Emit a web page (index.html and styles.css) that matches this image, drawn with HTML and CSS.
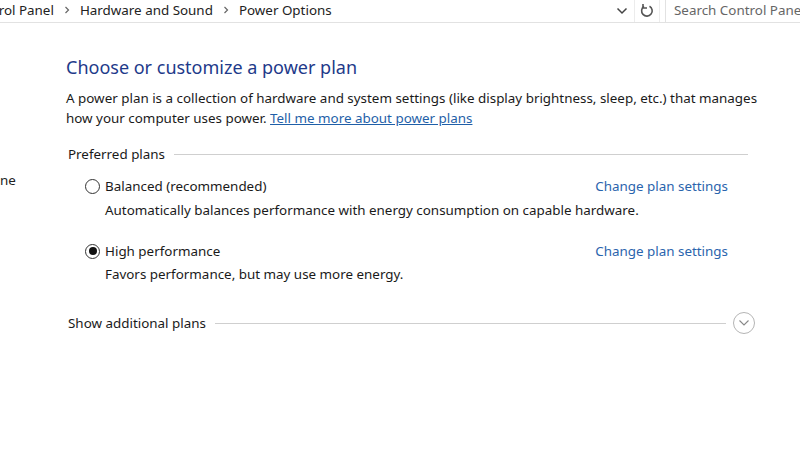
FILE: index.html
```html
<!DOCTYPE html>
<html>
<head>
<meta charset="utf-8">
<link rel="stylesheet" href="styles.css">
</head>
<body>
<div class="topbar">
  <div class="crumbs">
    <span class="crumb">Control Panel</span>
    <span class="sep"><svg width="8" height="8" viewBox="0 0 8 8"><path d="M2.5 1 L5.5 4 L2.5 7" fill="none" stroke="#666" stroke-width="1.2"/></svg></span>
    <span class="crumb">Hardware and Sound</span>
    <span class="sep"><svg width="8" height="8" viewBox="0 0 8 8"><path d="M2.5 1 L5.5 4 L2.5 7" fill="none" stroke="#666" stroke-width="1.2"/></svg></span>
    <span class="crumb">Power Options</span>
  </div>
  <div class="dropdown"><svg width="12" height="8" viewBox="0 0 12 8"><path d="M1.5 1.5 L6 6 L10.5 1.5" fill="none" stroke="#444" stroke-width="1.5"/></svg></div>
  <div class="refresh"><svg width="14" height="16" viewBox="0 0 14 16"><path d="M9.5 3.2 A5.3 5.3 0 1 1 4 3.4" fill="none" stroke="#555" stroke-width="1.6"/><path d="M3 1 L3 5 L7 5" fill="none" stroke="#555" stroke-width="1.6"/></svg></div>
  <div class="search">Search Control Panel</div>
</div>
<div class="main">
  <div class="nav"><div class="nav-item">ne</div></div>
  <div class="content">
    <h1 class="title">Choose or customize a power plan</h1>
    <p class="intro">A power plan is a collection of hardware and system settings (like display brightness, sleep, etc.) that manages how your computer uses power. <a class="link" href="#">Tell me more about power plans</a></p>
    <div class="group-head"><span>Preferred plans</span><div class="rule"></div></div>
    <div class="plan">
      <div class="plan-row">
        <span class="radio"></span>
        <span class="plan-name">Balanced (recommended)</span>
        <a class="change" href="#">Change plan settings</a>
      </div>
      <div class="plan-desc">Automatically balances performance with energy consumption on capable hardware.</div>
    </div>
    <div class="plan second">
      <div class="plan-row">
        <span class="radio checked"></span>
        <span class="plan-name">High performance</span>
        <a class="change" href="#">Change plan settings</a>
      </div>
      <div class="plan-desc">Favors performance, but may use more energy.</div>
    </div>
    <div class="group-head more"><span>Show additional plans</span><div class="rule"></div>
      <span class="expander"><svg width="12" height="8" viewBox="0 0 12 8"><path d="M1.5 1.5 L6 6 L10.5 1.5" fill="none" stroke="#888" stroke-width="1.1"/></svg></span>
    </div>
  </div>
</div>
</body>
</html>
```
FILE: styles.css
```css
html, body {
  margin: 0;
  padding: 0;
  background: #fff;
}
body {
  width: 800px;
  height: 451px;
  overflow: hidden;
  font-family: "Segoe UI", "Noto Sans", sans-serif;
  font-size: 13.4px;
  color: #1a1a1a;
}
.topbar {
  display: flex;
  align-items: stretch;
  height: 22px;
  border-bottom: 1px solid #e2e2e2;
}
.crumbs {
  flex: 1;
  display: flex;
  align-items: center;
  margin-left: -31px;
  margin-top: -3px;
  color: #222;
  white-space: nowrap;
}
.sep {
  display: inline-flex;
  width: 26px;
  justify-content: center;
  align-items: center;
}
.dropdown {
  width: 24px;
  display: flex;
  align-items: center;
  justify-content: center;
  margin-right: 0;
}
.refresh {
  width: 24px;
  display: flex;
  align-items: center;
  justify-content: center;
  border-left: 1px solid #ececec;
  border-right: 1px solid #ececec;
}
.search {
  width: 126px;
  margin-left: 5px;
  padding-left: 8px;
  border-left: 1px solid #e2e2e2;
  display: flex;
  align-items: center;
  margin-top: -3px;
  color: #666;
  white-space: nowrap;
  overflow: hidden;
}
.main {
  display: flex;
}
.nav {
  width: 66px;
  flex: none;
}
.nav-item {
  margin-top: 147px;
  line-height: 20px;
  color: #222;
}
.content {
  width: 710px;
}
.title {
  margin: 31px 0 0 0;
  font-weight: normal;
  font-size: 18px;
  line-height: 26px;
  color: #1e3a8a;
}
.intro {
  margin: 8px 0 0 0;
  width: 700px;
  line-height: 20px;
}
.link {
  color: #1f5fa8;
  text-decoration: underline;
}
.group-head {
  display: flex;
  align-items: center;
  height: 20px;
  margin-top: 16px;
  margin-left: 2px;
  width: 680px;
}
.group-head .rule {
  flex: 1;
  height: 1px;
  background: #cfcfcf;
  margin-left: 9px;
}
.plan {
  margin-left: 19px;
  width: 643px;
}
.plan-row {
  display: flex;
  align-items: center;
  height: 20px;
  margin-top: 12px;
}
.plan.second .plan-row {
  margin-top: 21px;
}
.radio {
  width: 15px;
  height: 15px;
  border: 1px solid #333;
  border-radius: 50%;
  box-sizing: border-box;
  display: inline-flex;
  align-items: center;
  justify-content: center;
  margin-right: 5px;
}
.radio.checked::after {
  content: "";
  width: 8px;
  height: 8px;
  border-radius: 50%;
  background: #111;
}
.plan-name {
  flex: 1;
}
.change {
  color: #2a64ad;
  text-decoration: none;
}
.plan-desc {
  margin-left: 20px;
  margin-top: 4px;
  line-height: 20px;
}
.plan.second .plan-desc {
  margin-top: 3px;
}
.group-head.more {
  margin-top: 28px;
  height: 22px;
  width: 687px;
}
.group-head.more .rule {
  margin-right: 7px;
}
.expander {
  width: 22px;
  height: 22px;
  border: 1px solid #b5b5b5;
  border-radius: 50%;
  box-sizing: border-box;
  display: flex;
  align-items: center;
  justify-content: center;
}
```
